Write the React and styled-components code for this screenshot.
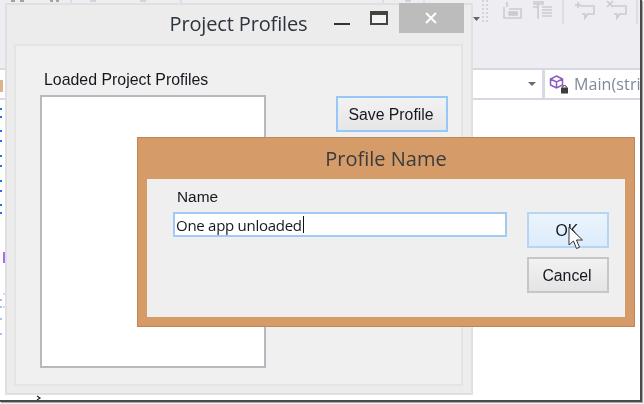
import React from "react";
import styled, { createGlobalStyle } from "styled-components";

const Global = createGlobalStyle`
  html, body { margin: 0; padding: 0; background: #fff; }
  #root { width: 644px; height: 404px; overflow: hidden; }
`;

const Frame = styled.div`
  position: relative;
  width: 640px;
  height: 400px;
  box-sizing: content-box;
  background: #fff;
  border-right: 2px solid #4a4a4a;
  border-bottom: 2px solid #4a4a4a;
  box-shadow: 1px 1px 1px #aaa;
  overflow: hidden;
  filter: blur(0.3px);
  font-family: "Liberation Sans", Arial, sans-serif;
`;
const Ide = styled.div`
  display: flex;
  flex-direction: column;
  height: 100%;
`;
const Toolbar = styled.div`
  height: 68px;
  flex: none;
  background: #eeeef2;
  display: flex;
  justify-content: flex-end;
`;
const ToolIcons = styled.svg`
  width: 172px;
  height: 26px;
  display: block;
`;
const TopMarks = styled.svg`
  position: absolute;
  left: 0;
  top: 0;
  width: 470px;
  height: 4px;
`;
const ComboRow = styled.div`
  height: 32px;
  flex: none;
  box-sizing: border-box;
  background: #fff;
  border-top: 2px solid #d6d8e4;
  border-bottom: 2px solid #d6d8e4;
  display: flex;
  justify-content: flex-end;
`;
const ComboCaret = styled.div`
  width: 73px;
  display: flex;
  align-items: center;
  justify-content: flex-end;
  padding-right: 6px;
  box-sizing: border-box;
  border-right: 3px solid #d6d8e4;
  &::after {
    content: "";
    border-left: 4px solid transparent;
    border-right: 4px solid transparent;
    border-top: 4px solid #6a6a6a;
  }
`;
const ComboMember = styled.div`
  width: 95px;
  display: flex;
  align-items: center;
  gap: 3px;
  padding-left: 4px;
  box-sizing: border-box;
  white-space: nowrap;
  font: 16px "Open Sans", sans-serif;
  letter-spacing: 0.1px;
  color: #7d8a98;
`;
const MemberIcon = styled.svg`
  width: 22px;
  height: 24px;
  flex: none;
`;
const Editor = styled.div`
  flex: 1;
  background: #fff;
`;
const Gutter = styled.svg`
  position: absolute;
  left: 0;
  top: 68px;
  width: 6px;
  height: 332px;
`;
const Chevron = styled.svg`
  position: absolute;
  left: 36px;
  top: 395px;
  width: 6px;
  height: 6px;
`;
const ProjectWindow = styled.section`
  position: absolute;
  left: 5px;
  top: 3px;
  width: 468px;
  height: 392px;
  box-sizing: border-box;
  background: #ececec;
  border: 2px solid #e0e0e0;
  padding: 0 8px 7px 7px;
  display: flex;
  flex-direction: column;
`;
const TitleBar = styled.header`
  height: 39px;
  flex: none;
  position: relative;
  display: flex;
  align-items: center;
  justify-content: center;
`;
const ProjectTitle = styled.h1`
  margin: 0 0 3px;
  font: 400 20px "Open Sans", sans-serif;
  letter-spacing: -0.15px;
  color: #2e343e;
`;
const WindowGlyph = styled.div`
  position: absolute;
  top: ${p => p.$top}px;
  left: ${p => p.$left}px;
  width: ${p => p.$w}px;
  height: ${p => p.$h}px;
  box-sizing: border-box;
  ${p => p.$max ? "border: 2px solid #444; border-top-width: 4px; background:#f4f4f4;" : "background:#333;"}
`;
const CloseButton = styled.div`
  position: absolute;
  top: -2px;
  right: -1px;
  width: 65px;
  height: 30px;
  padding-right: 2px;
  box-sizing: border-box;
  background: #bcbcbc;
  display: flex;
  align-items: center;
  justify-content: center;
`;
const ProjectPanel = styled.div`
  flex: 1;
  box-sizing: border-box;
  background: #f0f0f0;
  border: 2px solid #e4e4e4;
  padding: 25px 0 0 24px;
  display: grid;
  grid-template-columns: 226px 111px;
  column-gap: 70px;
  grid-template-rows: 24px 1fr;
  align-content: start;
`;
const ListLabel = styled.div`
  font-size: 15.9px;
  line-height: 18px;
  color: #15181e;
  padding-left: 4px;
  grid-column: 1 / 3;
`;
const ListBox = styled.div`
  height: 273px;
  box-sizing: border-box;
  background: #fff;
  border: 2px solid #b6b9be;
`;
const Button = styled.button`
  box-sizing: border-box;
  width: ${p => p.$w}px;
  height: ${p => p.$h}px;
  margin-top: ${p => p.$mt || 0}px;
  padding: 2px 2px 0 0;
  font: 15.8px "Liberation Sans", Arial, sans-serif;
  color: #15181e;
  border: 2px solid ${p => p.$border};
  background: ${p => p.$bg};
`;
const ProfileDialog = styled.section`
  position: absolute;
  left: 137px;
  top: 137px;
  width: 498px;
  height: 190px;
  box-sizing: border-box;
  background: #d59c69;
  border: 1px solid #bd8757;
  padding: 0 9px 9px;
  display: flex;
  flex-direction: column;
`;
const DialogTitle = styled.h2`
  margin: 0;
  height: 41px;
  flex: none;
  display: flex;
  align-items: center;
  justify-content: center;
  font: 400 20px "Open Sans", sans-serif;
  color: #3b3b3b;
`;
const DialogPanel = styled.div`
  flex: 1;
  background: #efefef;
  padding: 9px 17px 0 26px;
  display: grid;
  grid-template-columns: 334px 82px;
  column-gap: 20px;
  grid-template-rows: 24px 36px 9px 36px;
`;
const NameLabel = styled.div`
  font-size: 15.4px;
  line-height: 18px;
  color: #15181e;
  padding-left: 4px;
  grid-column: 1 / 3;
`;
const NameField = styled.div`
  box-sizing: border-box;
  height: 25px;
  background: #fff;
  border: 2px solid #a2caf4;
  display: flex;
  align-items: center;
  padding-left: 1px;
  font: 15px "Open Sans", sans-serif;
  letter-spacing: -0.27px;
  color: #15181e;
`;
const Caret = styled.span`
  display: inline-block;
  width: 1px;
  height: 17px;
  margin-left: 1px;
  background: #111;
`;
const ButtonColumn = styled.div`
  display: flex;
  flex-direction: column;
  gap: 9px;
  grid-row: 2 / 5;
  grid-column: 2;
`;
const Cursor = styled.svg`
  position: absolute;
  left: 568px;
  top: 226px;
  width: 16px;
  height: 25px;
`;

export default function App() {
  return (
    <Frame>
      <Global />
      <Ide>
        <Toolbar>
          <ToolIcons viewBox="0 0 172 26" fill="none" stroke="#c9cbd2" strokeWidth="1.6">
            <path d="M5 17h7l-3.5 4z" fill="#666" stroke="none" />
            <path d="M15 0v22M19 0v22" strokeDasharray="2 2" strokeWidth="1.5" />
            <path d="M36 7v11h17V9H41" />
            <rect x="41" y="12" width="8" height="3" fill="#c9cbd2" />
            <path d="M39 2v5" />
            <path d="M66 2h9v2h-9zM74 7h10M74 10h10M74 13h10M74 16h10" />
            <path d="M70 4v15M65 7h5" />
            <path d="M95 0v24" stroke="#d8dae2" />
            <path d="M110 2v6M107 5h6M112 6h14v8h-6l-3 4v-4h-3" />
            <path d="M139 1l6 6M145 1l-6 6M144 6h14v8h-6l-3 4v-4h-3" />
            <path d="M169 0v24" stroke="#d8dae2" />
          </ToolIcons>
        </Toolbar>
        <ComboRow>
          <ComboCaret />
          <ComboMember>
            <MemberIcon viewBox="0 0 22 24" fill="none">
              <path d="M7.5 4l6 3v6l-6 3-6-3V7z M1.5 7l6 3 6-3M7.5 10v6" stroke="#8a5bc0" strokeWidth="1.5" />
              <rect x="12" y="15.5" width="7" height="6" fill="#3c3c3c" />
              <path d="M13.5 15.5a2 2 0 0 1 4 0" stroke="#3c3c3c" />
            </MemberIcon>
            Main(stri
          </ComboMember>
        </ComboRow>
        <Editor />
      </Ide>
      <TopMarks viewBox="0 0 470 4" fill="none">
        <path d="M11 1h4M20 1h4M50 1h3M56 1h3" stroke="#8a8a8a" strokeWidth="1.5" />
        <path d="M71 0v4M181 0v4M383 0v4M424 0v4" stroke="#d4d6de" strokeWidth="1.2" />
        <path d="M90 1h6M140 1h6M405 1h6" stroke="#c9cbd2" strokeWidth="1.5" />
      </TopMarks>
      <Gutter viewBox="0 0 6 332">
        <rect x="0" y="0" width="5" height="2" fill="#d6d8e4" />
        <rect x="0" y="12" width="3" height="12" fill="#d8b58a" />
        <g fill="#2a6ff0">
          <rect x="0" y="40" width="2" height="2" /><rect x="0" y="48" width="2" height="2" />
          <rect x="0" y="62" width="2" height="2" /><rect x="0" y="72" width="2" height="2" />
          <rect x="0" y="87" width="2" height="2" /><rect x="0" y="97" width="2" height="2" />
          <rect x="0" y="112" width="2" height="2" /><rect x="0" y="122" width="2" height="2" />
          <rect x="0" y="136" width="2" height="2" /><rect x="0" y="144" width="2" height="2" />
        </g>
        <rect x="3" y="184" width="2" height="11" fill="#a86ef0" />
        <g fill="#9fc6f5">
          <rect x="0" y="231" width="2" height="2" /><rect x="0" y="238" width="2" height="2" />
          <rect x="0" y="250" width="2" height="2" /><rect x="0" y="265" width="2" height="2" />
        </g>
        <g fill="#eccdf5">
          <rect x="3" y="225" width="2" height="2" /><rect x="3" y="238" width="2" height="2" />
        </g>
      </Gutter>
      <Chevron viewBox="0 0 6 6">
        <path d="M1 1l3 2-3 2" fill="none" stroke="#222" strokeWidth="1.2" />
      </Chevron>
      <ProjectWindow>
        <TitleBar>
          <ProjectTitle>Project Profiles</ProjectTitle>
          <WindowGlyph $left={320} $top={18} $w={16} $h={2} />
          <WindowGlyph $left={356} $top={6} $w={18} $h={14} $max />
          <CloseButton>
            <svg width="12" height="12" viewBox="0 0 12 12">
              <path d="M1 1l10 10M11 1L1 11" stroke="#fff" strokeWidth="2" />
            </svg>
          </CloseButton>
        </TitleBar>
        <ProjectPanel>
          <ListLabel>Loaded Project Profiles</ListLabel>
          <ListBox />
          <Button $w={112} $h={36} $mt={1} $border="#98c6f6" $bg="linear-gradient(#f2f2f2, #e6e6e6)">Save Profile</Button>
        </ProjectPanel>
      </ProjectWindow>
      <ProfileDialog>
        <DialogTitle>Profile Name</DialogTitle>
        <DialogPanel>
          <NameLabel>Name</NameLabel>
          <NameField>One app unloaded<Caret /></NameField>
          <ButtonColumn>
            <Button $w={82} $h={36} $border="#b4d6f4" $bg="linear-gradient(#ecf4fc, #dcecfc)">OK</Button>
            <Button $w={82} $h={36} $border="#c6c6c6" $bg="linear-gradient(#f2f2f2, #e4e4e4)">Cancel</Button>
          </ButtonColumn>
        </DialogPanel>
      </ProfileDialog>
      <Cursor viewBox="0 0 16 25">
        <path d="M1 1v18l4.5-4 3 7.5 3-1.2-3-7.3h6z" fill="#fff" stroke="#333" strokeWidth="1" />
      </Cursor>
    </Frame>
  );
}
